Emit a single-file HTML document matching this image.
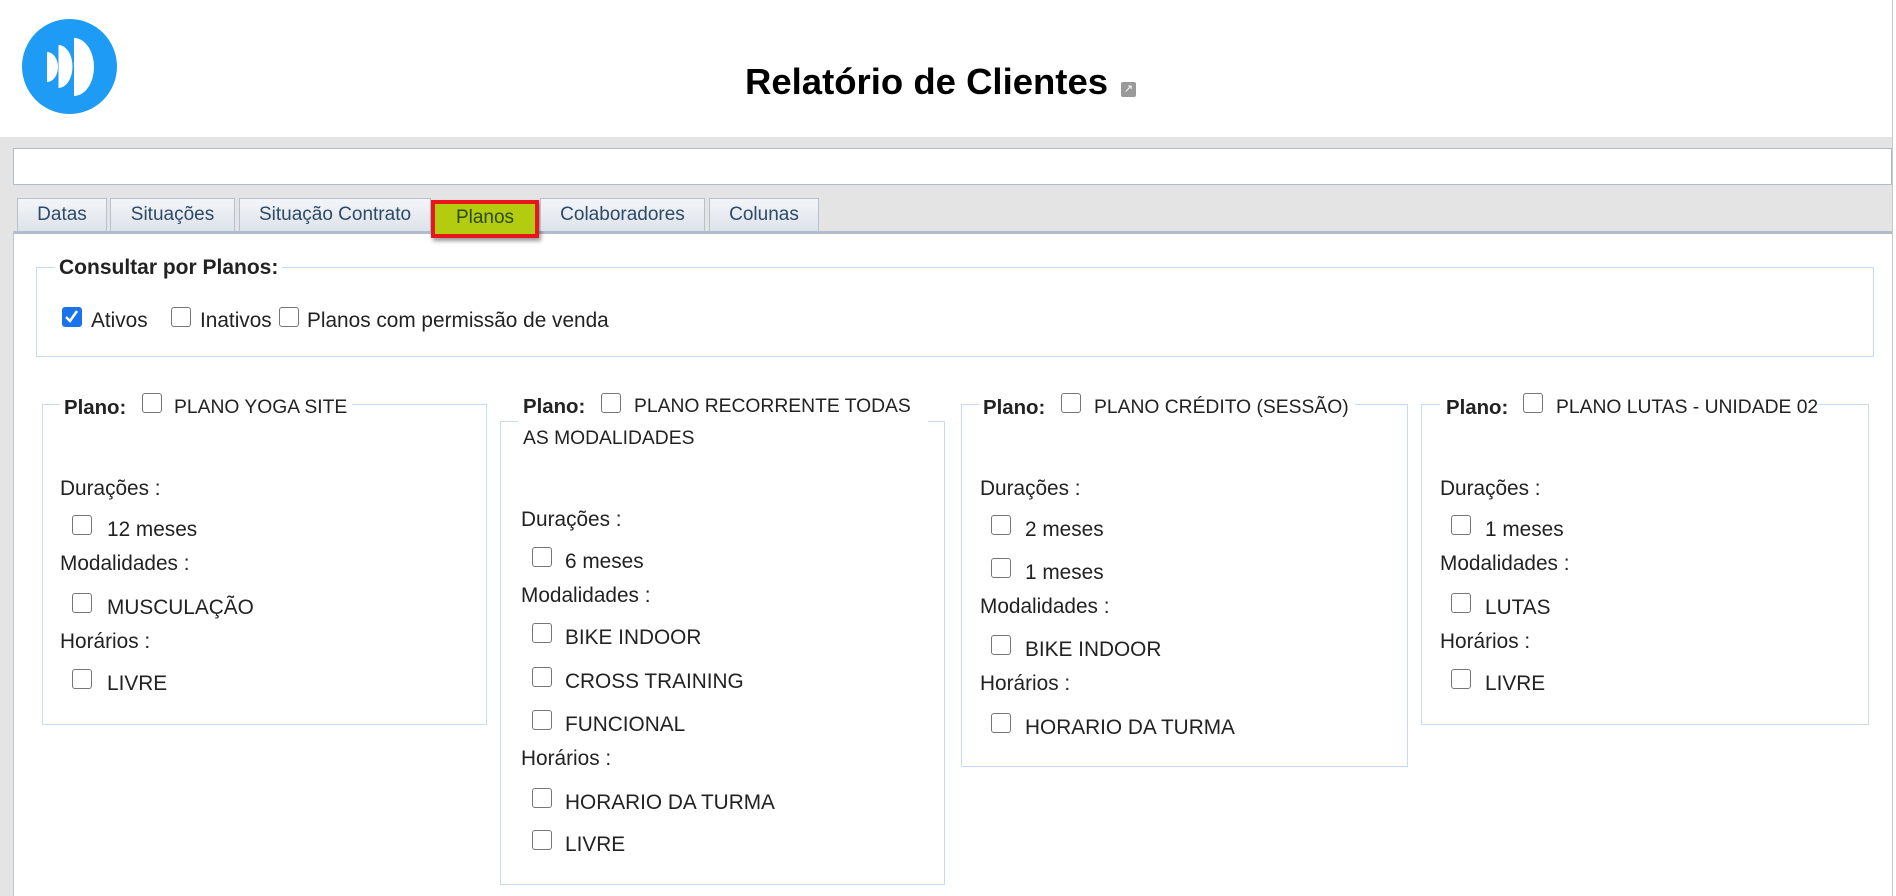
<!DOCTYPE html>
<html><head><meta charset="utf-8"><style>
*{margin:0;padding:0;box-sizing:border-box}
body{width:1896px;height:896px;overflow:hidden;background:#fff;font-family:"Liberation Sans",sans-serif;color:#222;position:relative}
.a{position:absolute;white-space:nowrap}
.t{font-size:20.8px;line-height:20px}
.cb{position:absolute;width:20px;height:20px;border:1.5px solid #767676;border-radius:3px;background:#fff}
.fs{position:absolute;border:1px solid #c4daf5}
.lg{position:absolute;background:#fff;height:24px}
.pl{font-size:20.4px;font-weight:bold;line-height:20px}
.pt{font-size:19.3px;line-height:20px}
.tab{position:absolute;top:198px;height:33px;background:linear-gradient(#f3f5f8,#dde3ea);border:1px solid #b5c1cf;border-bottom:none;font-size:19px;color:#2d4a66;text-align:center;line-height:32px}
</style></head><body>
<svg class="a" style="left:0;top:0" width="140" height="130">
<circle cx="69.5" cy="66.5" r="47.5" fill="#1e9bf5"/>
<path d="M47 52 A11 15 0 0 1 47 82 Z" fill="#fff"/>
<path d="M58.5 45 A14 21.5 0 0 1 58.5 88 Z" fill="#fff"/>
<path d="M74 38 A20 29 0 0 1 74 96 Z" fill="#fff"/>
</svg>
<div class="a" style="left:745px;top:62px;font-size:36.5px;font-weight:bold;color:#000;line-height:40px">Relatório de Clientes</div>
<div class="a" style="left:1121px;top:82px;width:15px;height:15px;background:#9a9a9a;border-radius:2px;color:#fff;font-size:11px;line-height:15px;text-align:center">↗</div>
<div class="a" style="left:0;top:137px;width:1896px;height:759px;background:#e4e4e4"></div>
<div class="a" style="left:1892px;top:0;width:4px;height:896px;background:#fff;border-left:1px solid #c8c8c8"></div>
<div class="a" style="left:13px;top:148px;width:1879px;height:37px;background:#fff;border:1px solid #aebccc"></div>
<div class="a" style="left:13px;top:231px;width:1879px;height:665px;background:#fff;border-top:3px solid #b0bccc;border-left:1px solid #c0c8d2"></div>
<div class="tab" style="left:17px;width:90px">Datas</div>
<div class="tab" style="left:110px;width:125px">Situações</div>
<div class="tab" style="left:239px;width:192px">Situação Contrato</div>
<div class="tab" style="left:431px;top:200px;width:108px;height:38px;background:#b4cc10;border:4px solid #e8151a;box-shadow:2px 3px 4px rgba(0,0,0,.4);line-height:28px;color:#2d4a10">Planos</div>
<div class="tab" style="left:540px;width:165px">Colaboradores</div>
<div class="tab" style="left:709px;width:110px">Colunas</div>

<div class="fs" style="left:36px;top:267px;width:1838px;height:90px"></div>
<div class="lg a" style="left:55px;top:256px;padding:0 4px;font-weight:bold;font-size:21px;line-height:24px">Consultar por Planos:</div>
<div class="cb" style="left:62px;top:307px;background:#1a73e8;border-color:#1a73e8"><svg width="17" height="17" style="position:absolute;left:0;top:0"><path d="M3 9 L7 13 L14 3" stroke="#fff" stroke-width="2.5" fill="none"/></svg></div>
<div class="a t" style="left:91px;top:311px">Ativos</div>
<div class="cb" style="left:171px;top:307px"></div>
<div class="a t" style="left:200px;top:311px">Inativos</div>
<div class="cb" style="left:279px;top:307px"></div>
<div class="a t" style="left:307px;top:311px">Planos com permissão de venda</div>

<!-- Panel 1 -->
<div class="fs" style="left:42px;top:404px;width:445px;height:321px"></div>
<div class="lg a" style="left:60px;top:392px;width:292px"></div>
<div class="a pl" style="left:64px;top:398px">Plano:</div>
<div class="cb" style="left:142px;top:393px"></div>
<div class="a pt" style="left:174px;top:398px">PLANO YOGA SITE</div>
<div class="a t" style="left:60px;top:479px">Durações :</div>
<div class="cb" style="left:72px;top:515px"></div><div class="a t" style="left:107px;top:520px">12 meses</div>
<div class="a t" style="left:60px;top:554px">Modalidades :</div>
<div class="cb" style="left:72px;top:593px"></div><div class="a t" style="left:107px;top:598px">MUSCULAÇÃO</div>
<div class="a t" style="left:60px;top:632px">Horários :</div>
<div class="cb" style="left:72px;top:669px"></div><div class="a t" style="left:107px;top:674px">LIVRE</div>

<!-- Panel 2 -->
<div class="fs" style="left:500px;top:421px;width:445px;height:464px"></div>
<div class="lg a" style="left:518px;top:410px;width:410px"></div>
<div class="a pl" style="left:523px;top:397px">Plano:</div>
<div class="cb" style="left:601px;top:393px"></div>
<div class="a pt" style="left:634px;top:397px">PLANO RECORRENTE TODAS</div>
<div class="a pt" style="left:523px;top:429px">AS MODALIDADES</div>
<div class="a t" style="left:521px;top:510px">Durações :</div>
<div class="cb" style="left:532px;top:547px"></div><div class="a t" style="left:565px;top:552px">6 meses</div>
<div class="a t" style="left:521px;top:586px">Modalidades :</div>
<div class="cb" style="left:532px;top:623px"></div><div class="a t" style="left:565px;top:628px">BIKE INDOOR</div>
<div class="cb" style="left:532px;top:667px"></div><div class="a t" style="left:565px;top:672px">CROSS TRAINING</div>
<div class="cb" style="left:532px;top:710px"></div><div class="a t" style="left:565px;top:715px">FUNCIONAL</div>
<div class="a t" style="left:521px;top:749px">Horários :</div>
<div class="cb" style="left:532px;top:788px"></div><div class="a t" style="left:565px;top:793px">HORARIO DA TURMA</div>
<div class="cb" style="left:532px;top:830px"></div><div class="a t" style="left:565px;top:835px">LIVRE</div>

<!-- Panel 3 -->
<div class="fs" style="left:961px;top:404px;width:447px;height:363px"></div>
<div class="lg a" style="left:979px;top:392px;width:376px"></div>
<div class="a pl" style="left:983px;top:398px">Plano:</div>
<div class="cb" style="left:1061px;top:393px"></div>
<div class="a pt" style="left:1094px;top:398px">PLANO CRÉDITO (SESSÃO)</div>
<div class="a t" style="left:980px;top:479px">Durações :</div>
<div class="cb" style="left:991px;top:515px"></div><div class="a t" style="left:1025px;top:520px">2 meses</div>
<div class="cb" style="left:991px;top:558px"></div><div class="a t" style="left:1025px;top:563px">1 meses</div>
<div class="a t" style="left:980px;top:597px">Modalidades :</div>
<div class="cb" style="left:991px;top:635px"></div><div class="a t" style="left:1025px;top:640px">BIKE INDOOR</div>
<div class="a t" style="left:980px;top:674px">Horários :</div>
<div class="cb" style="left:991px;top:713px"></div><div class="a t" style="left:1025px;top:718px">HORARIO DA TURMA</div>

<!-- Panel 4 -->
<div class="fs" style="left:1421px;top:404px;width:448px;height:321px"></div>
<div class="lg a" style="left:1440px;top:392px;width:378px"></div>
<div class="a pl" style="left:1446px;top:398px">Plano:</div>
<div class="cb" style="left:1523px;top:393px"></div>
<div class="a pt" style="left:1556px;top:398px">PLANO LUTAS - UNIDADE 02</div>
<div class="a t" style="left:1440px;top:479px">Durações :</div>
<div class="cb" style="left:1451px;top:515px"></div><div class="a t" style="left:1485px;top:520px">1 meses</div>
<div class="a t" style="left:1440px;top:554px">Modalidades :</div>
<div class="cb" style="left:1451px;top:593px"></div><div class="a t" style="left:1485px;top:598px">LUTAS</div>
<div class="a t" style="left:1440px;top:632px">Horários :</div>
<div class="cb" style="left:1451px;top:669px"></div><div class="a t" style="left:1485px;top:674px">LIVRE</div>
</body></html>
